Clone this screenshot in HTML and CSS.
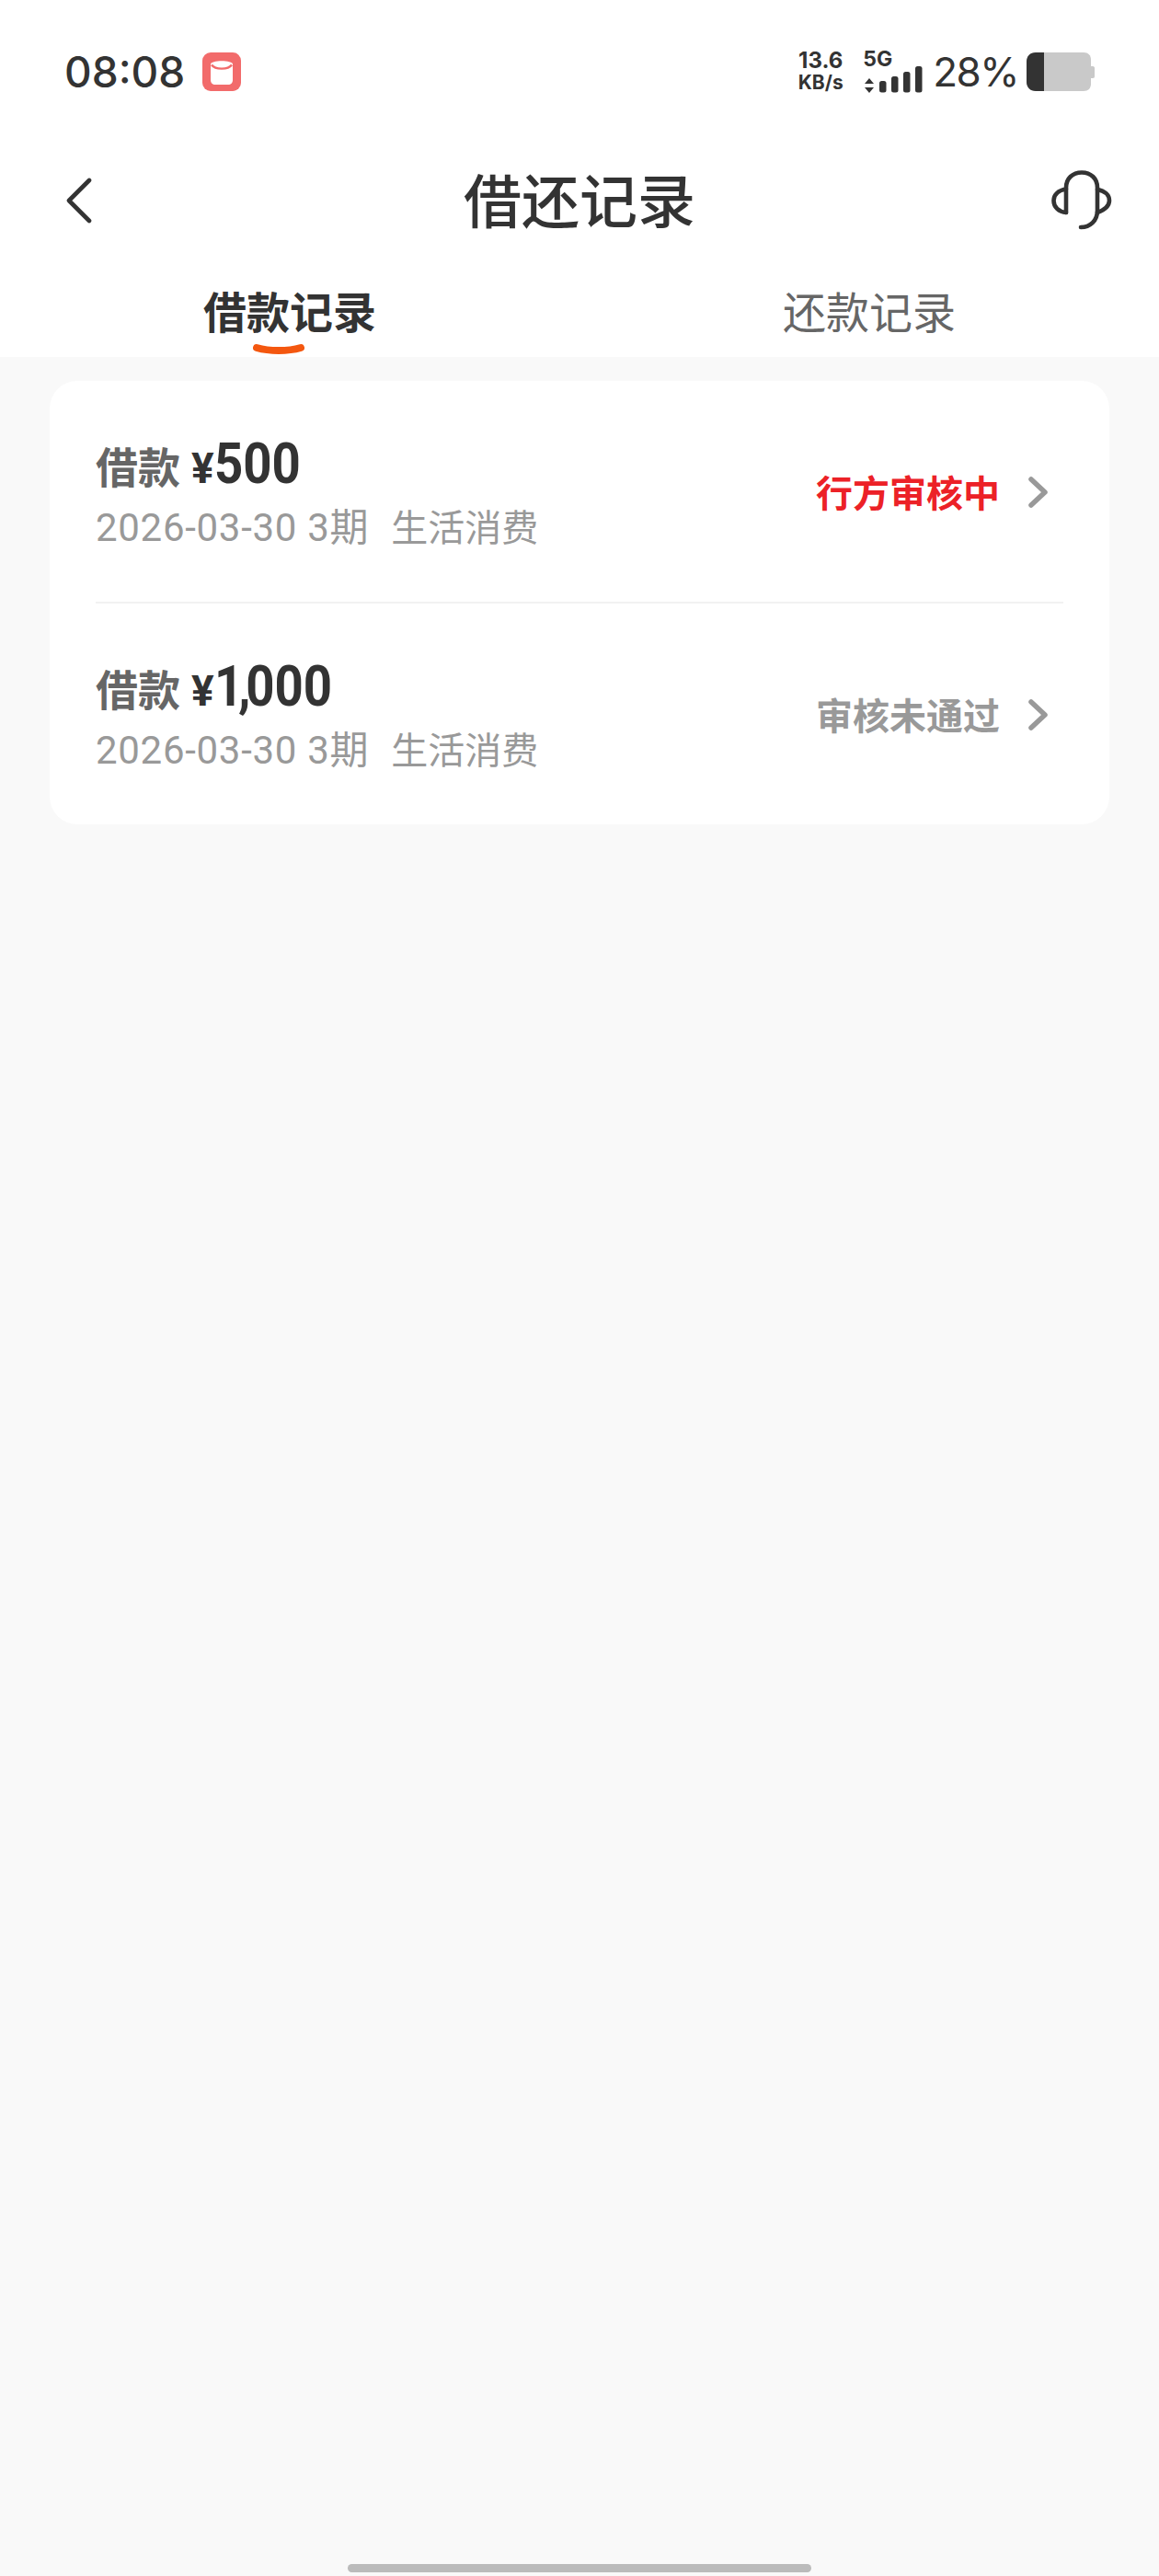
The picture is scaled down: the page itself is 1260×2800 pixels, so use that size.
FILE: index.html
```html
<!DOCTYPE html>
<html>
<head>
	<title>借还记录</title>
	<link rel="stylesheet" href="styles.css">
</head>
<body>
	<div class="page">
		<div class="top">
			<div class="statusbar">
				<div class="status-left">
					<span class="time">08:08</span>
					<svg class="app-icon" width="42" height="42" viewBox="0 0 42 42">
						<rect width="42" height="42" rx="9" fill="#f26b6b"/>
						<path d="M9 13 C9 8 33 8 33 13 V30 C33 33 31 35 28 35 H14 C11 35 9 33 9 30 Z" fill="#fff"/>
						<path d="M10 13.5 C14 19 28 19 32 13.5" fill="none" stroke="#f26b6b" stroke-width="2.4"/>
					</svg>
				</div>
				<div class="status-right">
					<div class="speed"><span class="speed-num">13.6</span><span>KB/s</span></div>
					<div class="net">
						<span class="net-label">5G</span>
						<svg width="64" height="29" viewBox="0 0 64 29">
							<path d="M1 12 L6 6 L11 12 Z M1 16 L11 16 L6 22 Z" fill="#333" transform="translate(0 7)"/>
							<rect x="17" y="16" width="7.5" height="12.500" rx="2.500" fill="#333"/>
							<rect x="30" y="11" width="7.5" height="17.500" rx="2.500" fill="#333"/>
							<rect x="43" y="6" width="7.5" height="22.500" rx="2.500" fill="#333"/>
							<rect x="56" y="0" width="7.5" height="28.500" rx="2.500" fill="#333"/>
						</svg>
					</div>
					<span class="battery-text">28%</span>
					<svg width="74" height="42" viewBox="0 0 74 42">
						<path d="M10 0 H62 C67 0 70 3 70 8 V34 C70 39 67 42 62 42 H10 C4 42 0 38 0 32 V10 C0 4 4 0 10 0 Z" fill="#c9c9c9"/>
						<path d="M19 0 V42 H10 C4 42 0 38 0 32 V10 C0 4 4 0 10 0 Z" fill="#333"/>
						<path d="M70 15 H72 C73.500 15 74 16 74 17 V26 C74 27 73.500 28 72 28 H70 Z" fill="#c9c9c9"/>
					</svg>
				</div>
			</div>
			<div class="header">
				<svg class="back" width="32" height="50" viewBox="0 0 32 50">
					<path d="M27 3 L5 25 L27 47" fill="none" stroke="#333" stroke-width="4.600" stroke-linecap="round" stroke-linejoin="round"/>
				</svg>
				<h1>借还记录</h1>
				<svg class="service" width="68" height="66" viewBox="0 0 68 66">
					<g fill="none" stroke="#333" stroke-width="4.600" stroke-linecap="round">
						<path d="M17 46 V19 C17 9 24 2.500 34 2.500 C44 2.500 51 9 51 19 V44 C51 55 43 62 33 62"/>
						<path d="M17 20.500 C8 22 3.500 27 3.500 33 C3.500 40 9 45.500 17 46"/>
						<path d="M51 21 C59 22.500 64 27 64 33 C64 39 59 43 51 46"/>
					</g>
				</svg>
			</div>
			<div class="tabs">
				<div class="tab active">
					<span>借款记录</span>
					<svg class="tab-mark" width="56" height="16" viewBox="0 0 56 16">
						<path d="M4 5 C18 9 38 9 52 5" fill="none" stroke="#f4570f" stroke-width="8" stroke-linecap="round"/>
					</svg>
				</div>
				<div class="tab"><span>还款记录</span></div>
			</div>
		</div>

		<div class="card">
			<div class="row">
				<div class="row-info">
					<div class="row-title">借款 <span class="amount"><span class="yen">¥</span><span class="digits">500</span></span></div>
					<div class="row-sub"><span class="row-date">2026-03-30 3期</span><span>生活消费</span></div>
				</div>
				<span class="row-status pending">行方审核中</span>
				<svg class="chevron" width="24" height="36" viewBox="0 0 24 36">
					<path d="M4 4 L19 18 L4 32" fill="none" stroke="#999" stroke-width="5.500" stroke-linecap="round" stroke-linejoin="round"/>
				</svg>
			</div>
			<div class="row">
				<div class="row-info">
					<div class="row-title">借款 <span class="amount"><span class="yen">¥</span><span class="digits"><span class="tight">1,</span>000</span></span></div>
					<div class="row-sub"><span class="row-date">2026-03-30 3期</span><span>生活消费</span></div>
				</div>
				<span class="row-status">审核未通过</span>
				<svg class="chevron" width="24" height="36" viewBox="0 0 24 36">
					<path d="M4 4 L19 18 L4 32" fill="none" stroke="#999" stroke-width="5.500" stroke-linecap="round" stroke-linejoin="round"/>
				</svg>
			</div>
		</div>

		<div class="home-bar"></div>
	</div>
</body>
</html>
```

FILE: styles.css
```css
body {
	margin: 0;
	padding: 0;
	background-color: #f9f9f9;
	color: #333;
	font-family: "Noto Sans CJK SC", Roboto, sans-serif;
}

.page {
	display: flex;
	flex-direction: column;
	height: 2800px;
}

.top {
	background-color: #fff;
	height: 388px;
	display: flex;
	flex-direction: column;
}

.statusbar {
	display: flex;
	justify-content: space-between;
	align-items: center;
	height: 42px;
	margin-top: 57px;
	padding: 0 70px;
}

.status-left {
	display: flex;
	align-items: center;
	gap: 19px;
}

.time {
	font-family: Inter, sans-serif;
	font-size: 46px;
	font-weight: 500;
	line-height: 42px;
}

.status-right {
	display: flex;
	align-items: center;
}

.speed {
	display: flex;
	flex-direction: column;
	align-items: center;
	width: 50px;
	font-family: Inter, sans-serif;
	font-size: 21px;
	font-weight: 700;
	line-height: 24px;
	margin-right: 22px;
}

.speed-num {
	font-size: 24px;
}

.net {
	display: flex;
	flex-direction: column;
	width: 64px;
}

.net-label {
	font-family: Inter, sans-serif;
	font-size: 23px;
	font-weight: 700;
	line-height: 16px;
	margin-left: -1px;
}

.battery-text {
	font-family: Inter, sans-serif;
	font-size: 44px;
	letter-spacing: -1.5px;
	line-height: 42px;
	margin: 0 9px 0 11px;
}

.header {
	display: grid;
	grid-template-columns: 1fr auto 1fr;
	align-items: center;
	height: 66px;
	margin-top: 86px;
	padding: 0 50px;
}

.back {
	margin-left: 20px;
}

.service {
	justify-self: end;
}

h1 {
	margin: 0 0 6px;
	font-size: 63px;
	font-weight: 500;
	line-height: 60px;
}

.tabs {
	display: flex;
	margin-top: 56px;
}

.tab {
	flex: 1;
	display: flex;
	flex-direction: column;
	align-items: center;
	font-size: 47px;
	line-height: 60px;
	color: #666;
}

.tab.active {
	color: #333;
	font-weight: 700;
}

.tab-mark {
	margin-top: 6px;
	margin-left: -24px;
}

.card {
	margin: 26px 54px 0;
	background-color: #fff;
	border-radius: 30px;
	height: 482px;
	padding: 0 50px;
	display: flex;
	flex-direction: column;
}

.row {
	flex: 1;
	display: flex;
	align-items: center;
}

.row + .row {
	border-top: 2px solid #f2f2f2;
}

.row-info {
	flex: 1;
}

.row-title {
	display: flex;
	align-items: baseline;
	gap: 12px;
	font-size: 46px;
	font-weight: 700;
	line-height: 72px;
	color: #666;
}

.amount {
	font-family: Roboto, sans-serif;
	font-size: 62px;
	color: #333;
}

.yen {
	font-size: 46px;
}

.digits {
	display: inline-block;
	transform: scaleX(0.88);
	transform-origin: left;
}

.tight {
	letter-spacing: -6px;
}

.row-sub {
	display: flex;
	align-items: baseline;
	gap: 24px;
	font-size: 40px;
	line-height: 52px;
	color: #999;
}

.row-date {
	font-family: Roboto, "Noto Sans CJK SC", sans-serif;
	font-size: 42px;
	letter-spacing: 0.7px;
}

.row-status {
	font-size: 40px;
	font-weight: 700;
	color: #999;
	margin-right: -2px;
}

.row-status.pending {
	color: #ec2127;
}

.chevron {
	margin: 2px 15px 0 32px;
}

.home-bar {
	margin: auto auto 4px;
	width: 504px;
	height: 9px;
	border-radius: 5px;
	background-color: #bbb;
}
```
